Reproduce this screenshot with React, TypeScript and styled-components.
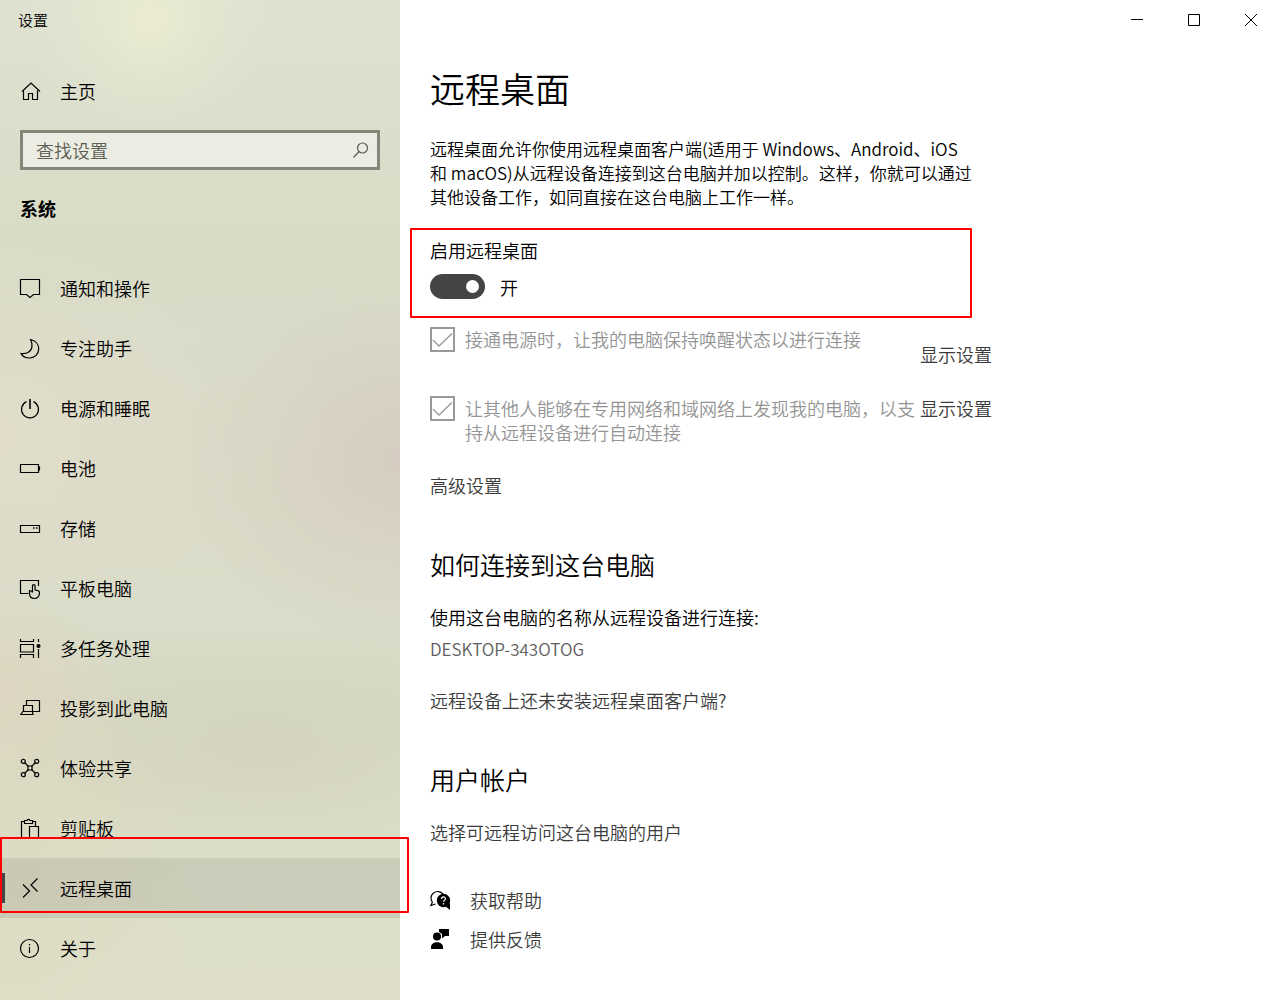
import React from "react";
import styled, { createGlobalStyle, css } from "styled-components";

const GlobalStyle = createGlobalStyle`
  *, *::before, *::after { box-sizing: border-box; }
  body {
    margin: 0;
    background: #fff;
    color: #000;
    font-family: "Noto Sans CJK SC", "Noto Sans", sans-serif;
    font-size: 18px;
    font-weight: 350;
    line-height: 24px;
  }
  h1, h2, p { margin: 0; font-weight: 350; }
  input, button { font: inherit; color: inherit; }
`;

const Window = styled.div`
  display: flex;
  align-items: stretch;
  min-height: 100vh;
`;

const Sidebar = styled.aside`
  flex: 0 0 400px;
  background:
    radial-gradient(circle at 150px 20px, rgba(236, 237, 210, 0.9), rgba(236, 237, 210, 0.3) 60px, rgba(236, 237, 210, 0) 120px),
    radial-gradient(ellipse 220px 190px at 400px 460px, rgba(214, 203, 193, 0.9), rgba(214, 205, 190, 0.4) 55%, rgba(214, 205, 190, 0)),
    radial-gradient(ellipse 240px 200px at 0 430px, rgba(226, 221, 203, 0.9), rgba(226, 221, 203, 0)),
    radial-gradient(ellipse 130px 100px at 0 690px, rgba(224, 214, 194, 0.9), rgba(224, 214, 194, 0)),
    radial-gradient(ellipse 260px 110px at 260px 750px, rgba(211, 210, 188, 0.7), rgba(211, 210, 188, 0)),
    radial-gradient(ellipse 200px 260px at 0 860px, rgba(221, 217, 193, 0.8), rgba(221, 217, 193, 0)),
    linear-gradient(180deg, #dfe2d0 0, #dcdecc 130px, #d9dcc6 220px, #d8dcc8 330px, #dcdbc8 500px, #d9ddc9 620px, #d5d9c3 700px, #dadcc5 780px, #dcdfc9 880px, #e0e0ca 1000px);
`;

const AppTitle = styled.div`
  padding: 8px 18px;
  font-size: 15px;
`;

const itemLayout = css`
  display: flex;
  align-items: center;
  gap: 20px;
  height: 60px;
  padding: 0 20px;
  color: #000;
  text-decoration: none;
`;

const HomeLink = styled.a`
  ${itemLayout}
  margin-top: 21px;
`;

const SearchBox = styled.label`
  display: flex;
  align-items: center;
  height: 40px;
  margin: 9px 20px 0;
  padding: 0 7px 0 13px;
  border: 3px solid #84867a;
  background: rgba(255, 255, 255, 0.45);
  color: #5c5e56;
`;

const SearchInput = styled.input`
  flex: 1;
  min-width: 0;
  height: 24px;
  padding: 0;
  border: 0;
  outline: 0;
  background: none;
  &::placeholder { color: #5c5e56; opacity: 1; }
`;

const GroupTitle = styled.h2`
  margin: 26px 20px 38px;
  font-size: 18px;
  && { font-weight: 700; }
`;

const NavItem = styled.a<{ $selected?: boolean }>`
  ${itemLayout}
  position: relative;
  ${(p) =>
    p.$selected &&
    css`
      background: rgba(0, 0, 0, 0.08);
      &::before {
        content: "";
        position: absolute;
        left: 0;
        top: 15px;
        width: 5px;
        height: 30px;
        background: #444;
      }
    `}
`;

const Highlight = styled.span<{ $inset: string }>`
  position: absolute;
  z-index: 1;
  inset: ${(p) => p.$inset};
  border: 2px solid #f00;
  border-radius: 1px;
  pointer-events: none;
`;

const Icon = styled.svg`
  flex: none;
  width: 20px;
  height: 20px;
  overflow: visible;
  fill: none;
  stroke: currentColor;
  stroke-width: 1.2;
`;

const Main = styled.main`
  flex: 1;
  min-width: 0;
`;

const CaptionBar = styled.div`
  display: flex;
  justify-content: flex-end;
  height: 40px;
  padding-right: 1px;
`;

const CaptionButton = styled.button`
  display: grid;
  place-items: center;
  width: 57px;
  padding: 0;
  border: 0;
  background: none;
`;

const CaptionIcon = styled.svg`
  width: 12px;
  height: 12px;
  fill: none;
  stroke: #000;
`;

const Content = styled.div`
  max-width: 622px;
  padding: 25px 30px 40px;
`;

const PageTitle = styled.h1`
  font-size: 35px;
  line-height: 46px;
`;

const Description = styled.p`
  margin-top: 26px;
  font-size: 17px;
  white-space: nowrap;
`;

const ToggleSection = styled.section`
  position: relative;
  margin-top: 29px;
`;

const ToggleRow = styled.label`
  display: flex;
  align-items: center;
  gap: 15px;
  height: 25px;
  margin-top: 12px;
`;

const Toggle = styled.input`
  appearance: none;
  display: flex;
  align-items: center;
  justify-content: flex-end;
  width: 55px;
  height: 25px;
  margin: 0;
  padding: 0 6px;
  border-radius: 13px;
  background: #444;
  &::before {
    content: "";
    width: 13px;
    height: 13px;
    border-radius: 50%;
    background: #fff;
  }
`;

const OptionRow = styled.div`
  display: grid;
  grid-template-columns: 485px auto;
  gap: 5px;
  align-items: start;
`;

const Options = styled.div`
  display: grid;
  gap: 30px;
  margin-top: 28px;
`;

const OptionLabel = styled.label`
  display: flex;
  gap: 10px;
  color: #949494;
`;

const CheckBox = styled.span`
  display: grid;
  flex: none;
  width: 25px;
  height: 25px;
  > * { grid-area: 1 / 1; }
`;

const CheckInput = styled.input`
  appearance: none;
  width: 25px;
  height: 25px;
  margin: 0;
  border: 2px solid #999;
`;

const CheckMark = styled.svg`
  width: 25px;
  height: 25px;
  fill: none;
  stroke: #999;
  stroke-width: 1.3;
  pointer-events: none;
`;

const TextLink = styled.a<{ $low?: boolean }>`
  display: inline-block;
  padding-top: ${(p) => (p.$low ? "15px" : "0")};
  color: #3c3c3c;
  text-decoration: none;
  white-space: nowrap;
`;

const Advanced = styled.p`
  margin-top: 29px;
`;

const SectionTitle = styled.h2`
  margin-top: 49px;
  font-size: 25px;
  line-height: 36px;
`;

const Field = styled.p`
  margin-top: 23px;
`;

const PcName = styled.p`
  margin-top: 8px;
  color: #606060;
  font-size: 17px;
`;

const LinkLine = styled.p<{ $gap: number }>`
  margin-top: ${(p) => p.$gap}px;
`;

const HelpLinks = styled.div`
  display: grid;
  gap: 15px;
  margin-top: 44px;
`;

const HelpLink = styled.a`
  display: flex;
  align-items: center;
  gap: 20px;
  color: #3c3c3c;
  text-decoration: none;
  svg { color: #000; }
`;

const navItems: { label: string; icon: React.ReactNode; selected?: boolean }[] = [
  { label: "通知和操作", icon: <path d="M.5 1.500h19v15h-6L10 19.500l-3.500-3h-6z" /> },
  { label: "专注助手", icon: <path d="M10.500 1.500c5 1 8.200 4.800 8.200 9.500 0 5-4 9-9 9-4 0-7.500-2-8.700-4.500 6 1 11-2.500 11-7.500 0-2.500-.5-4.500-1.500-6.500z" /> },
  { label: "电源和睡眠", icon: <><path d="M6.500 3.600a8.500 8.500 0 1 0 7 0" /><path d="M10 1v10" strokeWidth="1.600" /></> },
  { label: "电池", icon: <><path d="M.5 6.500h18v8H.5z" /><path d="M19.500 8.500v4" /></> },
  { label: "存储", icon: <><path d="M.5 7.500h19v7H.5z" /><path d="M13 10h1.500M16 10h1.500" strokeWidth="1.500" /></> },
  { label: "平板电脑", icon: <><path d="M8.500 15.500h-8v-13h18v5.500" /><path d="M12.500 14.500V8a1.300 1.300 0 0 1 2.600 0v4l3 .6c1 .3 1.400.9 1.400 1.900 0 3.700-2 6-5 6s-5-2-5-5v-3c1.500 0 2 .5 3 2" /></> },
  { label: "多任务处理", icon: <><path d="M.5 1v2.500h13V1M.5 20v-3.500h13V20M.5 6.500h13v7.500H.5zM18.500 1v3M18.500 11v9" /><circle cx="18.500" cy="8" r="1.500" fill="currentColor" /></> },
  { label: "投影到此电脑", icon: <><path d="M6.500 7V2.500h13v11H13" /><path d="M3.500 13.500V7.500h9v6M.8 16.500l2-3h9.500l.7 3z" /></> },
  { label: "体验共享", icon: <><path d="m4.500 4.500 4 4m3 3 4 4m0-11-4 4m-3 3-4 4" /><path d="M8 8h4v4H8z" /><circle cx="3.300" cy="3.300" r="2" /><circle cx="16.700" cy="3.300" r="2" /><circle cx="3.300" cy="16.700" r="2" /><circle cx="16.700" cy="16.700" r="2" /></> },
  { label: "剪贴板", icon: <><path d="M9 20H1.500V3.500h3M12.500 3.500h3V8M4.500 5.500v-3H7a1.600 1.600 0 0 1 3 0h2.500v3z" /><path d="M9.500 8.500h9v11.500h-9z" /></> },
  { label: "远程桌面", icon: <path d="m3 6.500 6.500 6.500L3 19.500M17.500.5 11 7l6.500 6.500" />, selected: true },
  { label: "关于", icon: <><circle cx="9.500" cy="10.500" r="9" /><path d="M9.500 9v6M9.500 6v1.500" /></> },
];

const options = [
  { id: "awake", text: "接通电源时，让我的电脑保持唤醒状态以进行连接", low: true },
  { id: "discover", text: "让其他人能够在专用网络和域网络上发现我的电脑，以支持从远程设备进行自动连接", low: false },
];

export default function App() {
  return (
    <>
      <GlobalStyle />
      <Window>
        <Sidebar>
          <AppTitle>设置</AppTitle>
          <HomeLink href="#">
            <Icon viewBox="0 0 20 20"><path d="M2 10.500 11 2l9 8.500M3.500 9.500V18.500H8.500v-6h4v6h5v-9" /></Icon>
            主页
          </HomeLink>
          <SearchBox>
            <SearchInput aria-label="查找设置" placeholder="查找设置" />
            <Icon viewBox="0 0 20 20"><circle cx="12.500" cy="8" r="5" /><path d="M9 11.500 3.500 17.500" /></Icon>
          </SearchBox>
          <GroupTitle>系统</GroupTitle>
          <nav>
            {navItems.map((item) => (
              <NavItem key={item.label} href="#" $selected={item.selected}>
                <Icon viewBox="0 0 20 20">{item.icon}</Icon>
                {item.label}
                {item.selected && <Highlight $inset="-21px -9px 5px 0" />}
              </NavItem>
            ))}
          </nav>
        </Sidebar>
        <Main>
          <CaptionBar>
            <CaptionButton aria-label="最小化"><CaptionIcon viewBox="0 0 12 12"><path d="M0 5.500h12" /></CaptionIcon></CaptionButton>
            <CaptionButton aria-label="最大化"><CaptionIcon viewBox="0 0 12 12"><path d="M.5.5h11v11H.5z" /></CaptionIcon></CaptionButton>
            <CaptionButton aria-label="关闭"><CaptionIcon viewBox="0 0 12 12"><path d="m0 0 12 12M12 0 0 12" /></CaptionIcon></CaptionButton>
          </CaptionBar>
          <Content>
            <PageTitle>远程桌面</PageTitle>
            <Description>
              远程桌面允许你使用远程桌面客户端(适用于 Windows、Android、iOS<br />
              和 macOS)从远程设备连接到这台电脑并加以控制。这样，你就可以通过<br />
              其他设备工作，如同直接在这台电脑上工作一样。
            </Description>
            <ToggleSection>
              <p>启用远程桌面</p>
              <ToggleRow>
                <Toggle type="checkbox" role="switch" defaultChecked />
                开
              </ToggleRow>
              <Highlight $inset="-10px 20px -19px -20px" />
            </ToggleSection>
            <Options>
              {options.map((o) => (
                <OptionRow key={o.id}>
                  <OptionLabel htmlFor={o.id}>
                    <CheckBox>
                      <CheckInput id={o.id} type="checkbox" defaultChecked disabled />
                      <CheckMark viewBox="0 0 25 25"><path d="m3 13 6 6L22 6.500" /></CheckMark>
                    </CheckBox>
                    {o.text}
                  </OptionLabel>
                  <TextLink href="#" $low={o.low}>显示设置</TextLink>
                </OptionRow>
              ))}
            </Options>
            <Advanced><TextLink href="#">高级设置</TextLink></Advanced>
            <SectionTitle>如何连接到这台电脑</SectionTitle>
            <Field>使用这台电脑的名称从远程设备进行连接:</Field>
            <PcName>DESKTOP-343OTOG</PcName>
            <LinkLine $gap={27}><TextLink href="#">远程设备上还未安装远程桌面客户端?</TextLink></LinkLine>
            <SectionTitle>用户帐户</SectionTitle>
            <LinkLine $gap={23}><TextLink href="#">选择可远程访问这台电脑的用户</TextLink></LinkLine>
            <HelpLinks>
              <HelpLink href="#">
                <Icon viewBox="0 0 20 20">
                  <path d="M2.500 12.500A6.200 6.200 0 1 1 13 4M2.500 12 .8 15.500l4.700-1.500" />
                  <circle cx="13.500" cy="10.500" r="6.700" fill="currentColor" stroke="none" />
                  <path d="m15 16 5 4v-7z" fill="currentColor" stroke="none" />
                  <path d="M11.500 9c0-2.800 4-2.600 4-.3 0 1.500-2 1.500-2 3M13.500 13v1.500" stroke="#fff" />
                </Icon>
                获取帮助
              </HelpLink>
              <HelpLink href="#">
                <Icon viewBox="0 0 20 20">
                  <g fill="currentColor" stroke="none">
                    <circle cx="7" cy="7.500" r="4" />
                    <path d="M1 20v-2c0-6.500 12-6.500 12 0v2zM9 0h10v7h-4l-3 2.500V5L9 3z" />
                  </g>
                </Icon>
                提供反馈
              </HelpLink>
            </HelpLinks>
          </Content>
        </Main>
      </Window>
    </>
  );
}
